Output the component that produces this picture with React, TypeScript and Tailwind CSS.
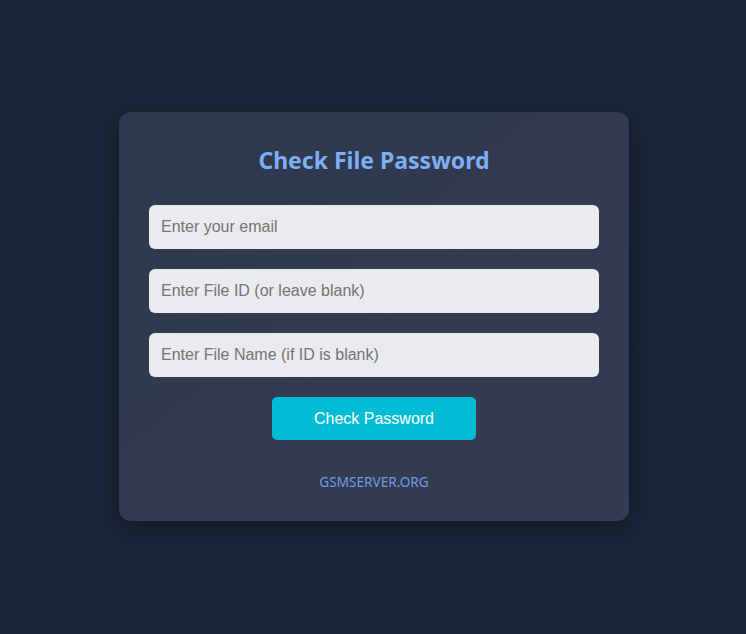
import React from "react";

export default function App() {
  return (
    <div className="w-full h-[634px] bg-gradient-to-br from-[#1b2539] to-[#1a253a] flex items-center justify-center pl-[2px] pb-[1px]">
      <div className="w-[510px] h-[409px] rounded-[12px] bg-gradient-to-br from-[#2f394d] to-[#343c51] shadow-[0_8px_28px_rgba(0,0,0,0.35)] px-[30px] pt-[31px] flex flex-col items-center">
        <h1 className="text-[23px] leading-[34px] font-bold text-[#7eaef5] [font-family:'Noto_Sans','Open_Sans',sans-serif]">
          Check File Password
        </h1>
        <div className="w-full flex flex-col gap-[20px] mt-[28px]">
          {["Enter your email", "Enter File ID (or leave blank)", "Enter File Name (if ID is blank)"].map((p) => (
            <input
              key={p}
              placeholder={p}
              className="w-full h-[44px] rounded-[6px] bg-[#e9ebee] px-[12px] text-[16px] text-[#333] placeholder:text-[#757575] outline-none [font-family:'Liberation_Sans',Arial,sans-serif]"
            />
          ))}
        </div>
        <button className="mt-[20px] w-[204px] h-[43px] rounded-[5px] bg-[#00bcd4] text-white text-[16px] [font-family:'Liberation_Sans',Arial,sans-serif]">
          Check Password
        </button>
        <div className="mt-[32px] text-[13.6px] text-[#6d9ae0] [font-family:'Noto_Sans','Open_Sans',sans-serif]">
          GSMSERVER.ORG
        </div>
      </div>
    </div>
  );
}
